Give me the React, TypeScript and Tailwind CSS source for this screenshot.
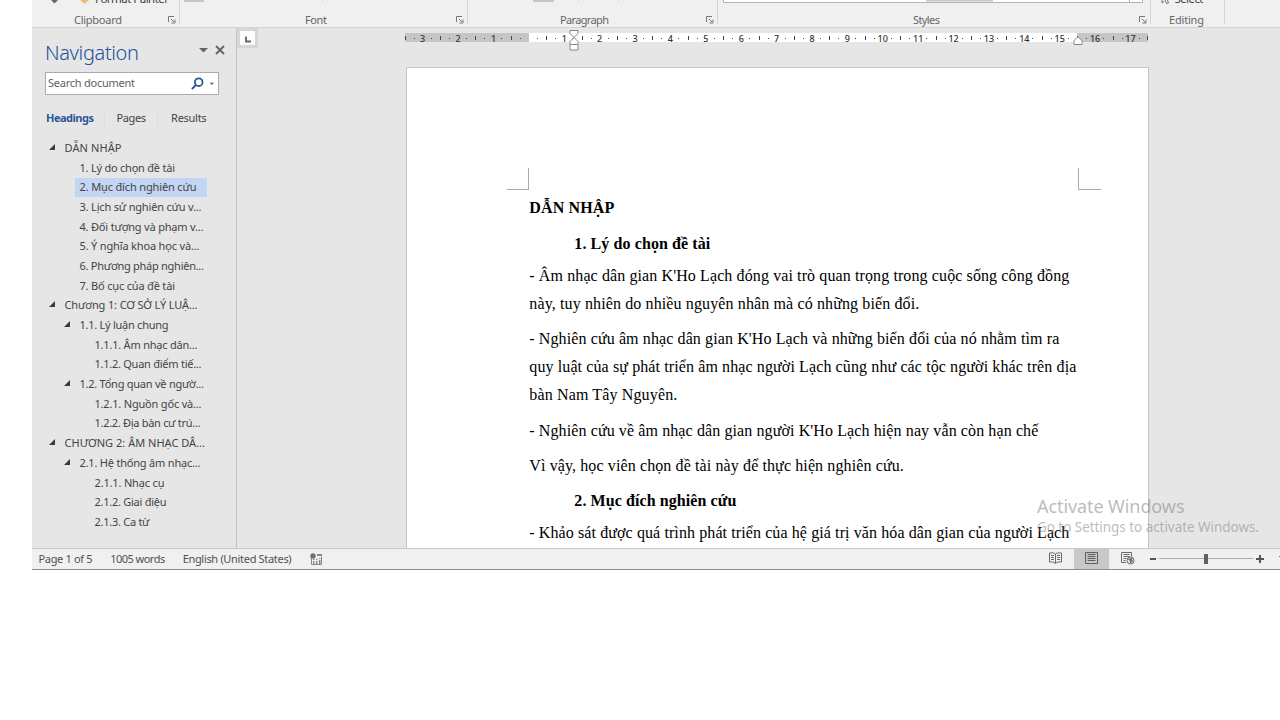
import { useLayoutEffect, useRef, useState } from "react";

type FitProps = { text: string; width: number; className?: string };

/** A single line of text whose tracking is adjusted to fill the given width. */
function Fit({ text, width, className = "" }: FitProps) {
  const ref = useRef<HTMLSpanElement>(null);
  const [tracking, setTracking] = useState(0);
  useLayoutEffect(() => {
    if (!ref.current) return;
    const natural = ref.current.getBoundingClientRect().width;
    setTracking((width - natural) / Math.max(1, text.length - 1));
  }, [text, width]);
  return (
    <span ref={ref} className={"inline-block shrink-0 whitespace-pre " + className} style={{ letterSpacing: tracking }}>
      {text}
    </span>
  );
}

function Launcher() {
  return (
    <svg width="8" height="8" viewBox="0 0 8 8" fill="none" stroke="#777" className="shrink-0">
      <path d="M.5 6V.5H6M3 3l3 3M7 3.5V7H3.5" />
    </svg>
  );
}

function Ribbon() {
  return (
    <header className="relative flex h-7 shrink-0 overflow-hidden border-b border-[#d6d6d6] bg-[#f0f0f0] text-[11px] text-[#666]">
      <div className="flex h-6 w-[148px] shrink-0 items-end border-r border-[#d4d4d4] pl-[42px]">
        <Fit text="Clipboard" width={48} className="h-[12px] leading-[15px]" />
        <span className="ml-[46px]"><Launcher /></span>
      </div>
      <div className="flex h-6 w-[288px] shrink-0 items-end border-r border-[#d4d4d4] pl-[125px]">
        <Fit text="Font" width={22} className="h-[12px] leading-[15px]" />
        <span className="ml-[129px]"><Launcher /></span>
      </div>
      <div className="flex h-6 w-[250px] shrink-0 items-end border-r border-[#d4d4d4] pl-[92px]">
        <Fit text="Paragraph" width={49} className="h-[12px] leading-[15px]" />
        <span className="ml-[98px]"><Launcher /></span>
      </div>
      <div className="flex h-6 w-[433px] shrink-0 items-end border-r border-[#d4d4d4] pl-[195px]">
        <Fit text="Styles" width={27} className="h-[12px] leading-[15px]" />
        <span className="ml-[200px]"><Launcher /></span>
      </div>
      <div className="flex h-6 w-[74px] shrink-0 items-end border-r border-[#d4d4d4] pl-[18px]">
        <Fit text="Editing" width={35} className="h-[12px] leading-[15px]" />
      </div>
      <svg className="absolute left-0 top-0" width="1248" height="6" viewBox="32 0 1248 6">
        <path d="M51 0h7l-3.5 3.5z" fill="#666" />
        <path d="M80 0h9l-4.500 4z" fill="#eebb72" />
        <path d="M184 0h20v2h-20zM533 0h21v2h-21z" fill="#c6c6c6" />
        <path d="M322.500 0v1M578.500 0v1M618.500 0v1" stroke="#ccc" />
        <path d="M723.500 0v2.500H1142.500V0M1129.500 0v2.500" fill="white" stroke="#b4b4b4" />
        <path d="M926 0h67v1.500h-67z" fill="#c6c6c6" />
        <path d="M1162 0v3l2-1.500M1165 0l1.500 3.500 2-.5-1-3" fill="none" stroke="#777" />
      </svg>
      <div className="absolute -top-[10px] left-[63px] flex text-[11.5px] text-[#444]">
        <Fit text="Format Painter" width={74} className="leading-[18px]" />
        <Fit text="Select" width={29} className="ml-[1006px] leading-[18px]" />
      </div>
    </header>
  );
}

type Heading = { text: string; width: number; level: number; open?: boolean; active?: boolean };

const headings: Heading[] = [
  { text: "DẪN NHẬP", width: 57, level: 0, open: true },
  { text: "1. Lý do chọn đề tài", width: 95.5, level: 1 },
  { text: "2. Mục đích nghiên cứu", width: 117, level: 1, active: true },
  { text: "3. Lịch sử nghiên cứu v...", width: 122, level: 1 },
  { text: "4. Đối tượng và phạm v...", width: 124, level: 1 },
  { text: "5. Ý nghĩa khoa học và...", width: 120, level: 1 },
  { text: "6. Phương pháp nghiên...", width: 124.5, level: 1 },
  { text: "7. Bố cục của đề tài", width: 95.5, level: 1 },
  { text: "Chương 1: CƠ SỞ LÝ LUẬ...", width: 133, level: 0, open: true },
  { text: "1.1. Lý luận chung", width: 89, level: 1, open: true },
  { text: "1.1.1. Âm nhạc dân...", width: 103, level: 2 },
  { text: "1.1.2. Quan điểm tiế...", width: 107, level: 2 },
  { text: "1.2. Tổng quan về ngườ...", width: 124.5, level: 1, open: true },
  { text: "1.2.1. Nguồn gốc và...", width: 107, level: 2 },
  { text: "1.2.2. Địa bàn cư trú...", width: 106, level: 2 },
  { text: "CHƯƠNG 2: ÂM NHẠC DÂ...", width: 140.5, level: 0, open: true },
  { text: "2.1. Hệ thống âm nhạc...", width: 121, level: 1, open: true },
  { text: "2.1.1. Nhạc cụ", width: 70, level: 2 },
  { text: "2.1.2. Giai điệu", width: 72, level: 2 },
  { text: "2.1.3. Ca từ", width: 55, level: 2 },
];

const indents = ["pl-4", "pl-[31px]", "pl-[46px]"];

function Navigation() {
  return (
    <aside className="flex w-[205px] shrink-0 flex-col border-r border-[#c3c3c3] text-[#444]">
      <div className="flex h-[42px] items-center pl-[13px] pt-[7px]">
        <Fit text="Navigation" width={94} className="text-[20px] font-light leading-6 text-[#2450a0]" />
        <svg width="28" height="12" viewBox="0 0 28 12" className="-mt-[6px] ml-[59px]">
          <path d="M1 4h9L5.500 8.500z" fill="#666" />
          <path d="M18 2l8 8M26 2l-8 8" stroke="#666" strokeWidth="2" />
        </svg>
      </div>
      <div className="ml-[13px] mt-[2px] flex h-[23px] w-[174px] items-center border border-[#ababab] bg-white pl-[2px] text-[11px] text-[#606060]">
        <Fit text="Search document" width={87} />
        <svg width="30" height="16" viewBox="0 0 30 16" className="ml-[56px]">
          <circle cx="8.500" cy="6" r="4.200" fill="none" stroke="#2b579a" strokeWidth="2" />
          <path d="M5.500 9L1 13.500" stroke="#2b579a" strokeWidth="2.200" />
          <path d="M20.500 6.500h5L23 9z" fill="#666" />
        </svg>
      </div>
      <div className="mb-px mt-[14px] flex h-[18px] items-center pl-[14px] text-[11px]">
        <Fit text="Headings" width={48} className="font-bold text-[#2b579a]" />
        <span className="ml-[10px] h-[18px] w-px bg-[#dedede]" />
        <Fit text="Pages" width={29.5} className="ml-3" />
        <span className="ml-[11px] h-[18px] w-px bg-[#dedede]" />
        <Fit text="Results" width={35.5} className="ml-[13.500px]" />
      </div>
      <ul className="mt-[10px] pl-[17px] text-[11px]">
        {headings.map((h) => (
          <li key={h.text} className="flex h-[19.7px]">
            <div className={"flex items-center " + indents[h.level]}>
              <span className="relative">
                {h.open && (
                  <svg width="6" height="6" viewBox="0 0 6 6" className="absolute -left-[16px] -top-[4px]">
                    <path d="M6 0v6H0z" fill="#3a3a3a" />
                  </svg>
                )}
              </span>
              <span className={h.active ? "-ml-[5px] flex h-[19px] w-[132px] items-center bg-[#c2d5f2] pl-[5px]" : "flex"}>
                <Fit text={h.text} width={h.width} className="-ml-[0.5px] leading-[18px]" />
              </span>
            </div>
          </li>
        ))}
      </ul>
    </aside>
  );
}

const centimetres = Array.from({ length: 21 }, (_, i) => i - 3);

function Ruler() {
  return (
    <div className="relative ml-[167.700px] mt-[5px] flex h-[9px] w-[743.400px] bg-[linear-gradient(90deg,#c6c6c6_124px,white_124px,white_672px,#c6c6c6_672px)] text-[9px] font-medium text-[#333]">
      {centimetres.map((n) => (
        <div key={n} className="flex w-[35.400px] items-center pt-px">
          <span className="h-[4px] w-px bg-[#444]" />
          <span className="ml-2 size-px bg-[#444]" />
          <span className="flex w-[16px] justify-center leading-[9px]">{n === 0 ? "" : Math.abs(n)}</span>
          <span className="size-px bg-[#444]" />
        </div>
      ))}
      <span className="absolute right-0 top-[3px] h-[4px] w-px bg-[#444]" />
      <svg width="10" height="22" viewBox="0 0 10 22" className="absolute -top-[3px] left-[164px]" fill="white" stroke="#888">
        <path d="M1 .5h8v3L5 7.500 1 3.500zM1 14.500v-3l4-4 4 4v3zM1 14.500h8v5.500H1z" />
      </svg>
      <svg width="10" height="9" viewBox="0 0 10 9" className="absolute left-[668px] top-[3px]" fill="white" stroke="#888">
        <path d="M1 8.500v-4L5 .8l4 3.700v4z" />
      </svg>
    </div>
  );
}

type Line = { text: string; width: number; gap: string };

const lines: Line[] = [
  { text: "DẪN NHẬP", width: 85, gap: "font-bold" },
  { text: "1. Lý do chọn đề tài", width: 136, gap: "mt-2 pl-[45px] font-bold" },
  { text: "- Âm nhạc dân gian K'Ho Lạch đóng vai trò quan trọng trong cuộc sống công đồng", width: 540, gap: "mt-1" },
  { text: "này, tuy nhiên do nhiều nguyên nhân mà có những biến đổi.", width: 390, gap: "" },
  { text: "- Nghiên cứu âm nhạc dân gian K'Ho Lạch và những biến đổi của nó nhằm tìm ra", width: 530, gap: "mt-[7px]" },
  { text: "quy luật của sự phát triển âm nhạc người Lạch cũng như các tộc người khác trên địa", width: 547, gap: "" },
  { text: "bàn Nam Tây Nguyên.", width: 148, gap: "" },
  { text: "- Nghiên cứu về âm nhạc dân gian người K'Ho Lạch hiện nay vẫn còn hạn chế", width: 509, gap: "mt-2" },
  { text: "Vì vậy, học viên chọn đề tài này để thực hiện nghiên cứu.", width: 374.5, gap: "mt-[7px]" },
  { text: "2. Mục đích nghiên cứu", width: 162, gap: "mt-[7px] pl-[45px] font-bold" },
  { text: "- Khảo sát được quá trình phát triển của hệ giá trị văn hóa dân gian của người Lạch", width: 540, gap: "mt-1" },
];

function DocumentArea() {
  return (
    <main className="relative flex min-w-0 flex-1 flex-col overflow-hidden">
      <div className="absolute left-0 top-0 flex h-[20px] w-[21px] items-center justify-center bg-[#d6d6d6]">
        <svg width="15" height="14" viewBox="0 0 15 14">
          <path d="M0 0h15v14H0z" fill="#fcfcfc" />
          <path d="M6 5.500v5h5" fill="none" stroke="#666" strokeWidth="1.800" />
        </svg>
      </div>
      <Ruler />
      <article className="ml-[169px] mt-[25px] h-[520px] w-[743px] shrink-0 border border-[#c6c6c6] bg-white">
        <div className="mt-[100px] flex justify-between pl-[100px] pr-[47px]">
          <span className="h-[22px] w-[22px] border-b border-r border-[#aaa]" />
          <span className="h-[22px] w-[23px] border-b border-l border-[#aaa]" />
        </div>
        <div className="mt-[4px] pl-[122.300px] font-['Liberation_Serif',serif] text-[16px] text-black">
          {lines.map((l) => (
            <p key={l.text} className={"h-7 leading-7 " + l.gap}>
              <Fit text={l.text} width={l.width} />
            </p>
          ))}
        </div>
      </article>
      <div className="absolute left-[800px] top-[466px] flex flex-col text-[#8d8d8d]/60">
        <Fit text="Activate Windows" width={147.5} className="h-[24px] self-start text-[18px] leading-6" />
        <Fit text="Go to Settings to activate Windows." width={222} className="self-start text-[13.5px] leading-[18px]" />
      </div>
    </main>
  );
}

function StatusBar() {
  return (
    <footer className="flex h-[22px] shrink-0 items-center border-b border-t border-b-[#8e8e8e] border-t-[#c8c8c8] bg-[#f0f0f0] pl-[6.500px] text-[11px] text-[#505050]">
      <Fit text="Page 1 of 5" width={54} />
      <Fit text="1005 words" width={55} className="ml-[18px]" />
      <Fit text="English (United States)" width={109} className="ml-[18px]" />
      <svg width="12" height="12" viewBox="0 0 12 12" className="ml-[18.500px] shrink-0" fill="none">
        <path d="M1.500 5v6.500h10V3.500" stroke="#888" />
        <path d="M7 1h5v2H7zM3 6h1.500v1H3zM6 6h1.500v1H6zM9 5h1.500v1H9zM3 8h1.500v3H3zM6 8h1.500v3H6zM9 7h1.500v4H9z" fill="#888" />
        <circle cx="3" cy="3" r="2.700" fill="#707070" />
      </svg>
      <svg width="13" height="12" viewBox="0 0 13 12" className="mb-[2px] ml-[727px] shrink-0" fill="none" stroke="#6a6a6a">
        <path d="M6.500 2v9.500M6.500 2C5 .7 3 .7.500 1v9c2.500-.3 4.500 0 6 1.500C8 10 10 9.700 12.500 10V1C10 .7 8 .7 6.500 2M2 3.500h3M2 5.500h3M2 7.500h3M8 3.500h3M8 5.500h3M8 7.500h3" />
      </svg>
      <span className="ml-[12px] flex h-5 w-[35px] shrink-0 items-center justify-center bg-[#c8c8c8] pb-[2px]">
        <svg width="13" height="12" viewBox="0 0 13 12" fill="none" stroke="#5e5e5e">
          <path d="M.5.5h12v11H.5zM2.500 2.500h8M2.500 4.500h8M2.500 6.500h8M2.500 8.500h8" />
        </svg>
      </span>
      <svg width="14" height="13" viewBox="0 0 14 13" className="mb-px ml-[12px] shrink-0" fill="none" stroke="#6a6a6a">
        <path d="M5 10.500H.5V.5h10v4M2.500 2.500h6M2.500 4.500h6M2.500 6.500h3M2.500 8.500h2" />
        <circle cx="9.500" cy="8.500" r="3.500" fill="#f0f0f0" />
        <path d="M7 7l2 1 .5 3 2-2-1-2 1-1.500" fill="#777" />
      </svg>
      <svg width="131" height="12" viewBox="1149 0 131 12" className="mb-px ml-[14px] shrink-0">
        <path d="M1150 6h6M1256 6h8M1260 2v8" stroke="#555" strokeWidth="2" />
        <path d="M1159 5.500h94" stroke="#aaa" />
        <path d="M1204 1h4v10h-4z" fill="#606060" />
        <path d="M1279 3.500h2" stroke="#777" />
      </svg>
    </footer>
  );
}

export default function App() {
  return (
    <div className="h-[720px] w-[1280px] overflow-hidden bg-white pl-8 font-['Noto_Sans','Open_Sans',sans-serif]">
      <div className="flex h-[570px] flex-col overflow-hidden bg-[#e6e6e6]">
        <Ribbon />
        <div className="flex min-h-0 flex-1">
          <Navigation />
          <DocumentArea />
        </div>
        <StatusBar />
      </div>
    </div>
  );
}
